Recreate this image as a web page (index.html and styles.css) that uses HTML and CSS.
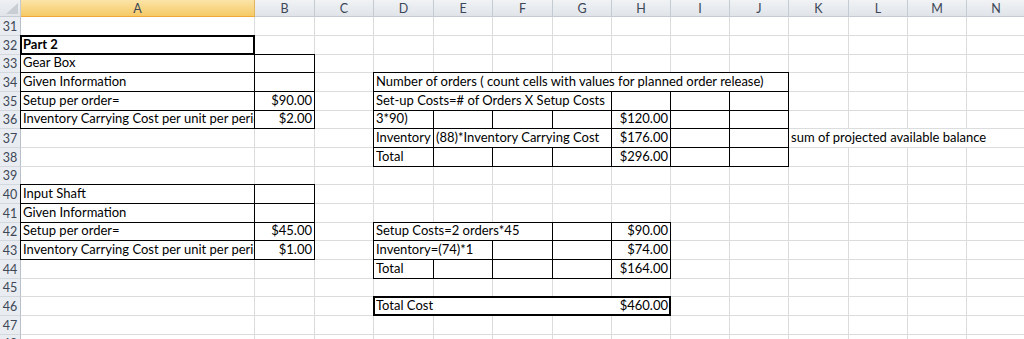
FILE: index.html
```html
<!DOCTYPE html>
<html lang="en">

<head>
  <meta charset="UTF-8">
  <meta name="viewport" content="width=device-width, initial-scale=1.0">
  <title>Part 2 - Ordering Costs</title>
  <link rel="stylesheet" href="styles.css">
</head>

<body>
  <div id="sheet" class="sheet"></div>

  <script>
    const columns = 'ABCDEFGHIJKLMN'.split('');
    const firstRow = 31;
    const lastRow = 48;

    // Cell contents, keyed by address. Strings starting with $ are right aligned.
    const values = {
      A32: { text: 'Part 2', bold: true },
      A33: 'Gear Box',
      A34: 'Given Information',
      D34: { text: 'Number of orders ( count cells with values for planned order release)', span: 7 },
      A35: 'Setup per order=',
      B35: '$90.00',
      D35: { text: 'Set-up Costs=# of Orders X Setup Costs', span: 4 },
      A36: 'Inventory Carrying Cost per unit per period',
      B36: '$2.00',
      D36: '3*90)',
      H36: '$120.00',
      D37: 'Inventory',
      E37: { text: '(88)*Inventory Carrying Cost', span: 3 },
      H37: '$176.00',
      K37: { text: 'sum of projected available balance', span: 4 },
      D38: 'Total',
      H38: '$296.00',
      A40: 'Input Shaft',
      A41: 'Given Information',
      A42: 'Setup per order=',
      B42: '$45.00',
      D42: { text: 'Setup Costs=2 orders*45', span: 3 },
      H42: '$90.00',
      A43: 'Inventory Carrying Cost per unit per period',
      B43: '$1.00',
      D43: { text: 'Inventory=(74)*1', span: 2 },
      H43: '$74.00',
      D44: 'Total',
      H44: '$164.00',
      D46: { text: 'Total Cost', span: 4, open: true },
      H46: '$460.00'
    };

    // Black cell borders: "each" boxes every cell of the range, otherwise only the outline
    const borders = [
      { range: 'A32', medium: true },
      { range: 'A33:B36', each: true },
      { range: 'D34:J34' },
      { range: 'D35:G35' },
      { range: 'H35:J35', each: true },
      { range: 'D36:J36', each: true },
      { range: 'D37' },
      { range: 'E37:G37' },
      { range: 'H37:J37', each: true },
      { range: 'D38:J38', each: true },
      { range: 'A40:B43', each: true },
      { range: 'D42:F42' },
      { range: 'G42:H42', each: true },
      { range: 'D43:E43' },
      { range: 'F43:H43', each: true },
      { range: 'D44:H44', each: true },
      { range: 'D46:H46', medium: true }
    ];

    const sheet = document.getElementById('sheet');

    function place(el, row, col, rowSpan, colSpan) {
      el.style.gridRow = `${row} / span ${rowSpan || 1}`;
      el.style.gridColumn = `${col} / span ${colSpan || 1}`;
    }

    // "D34" -> grid track numbers (row 1 and column 1 are the headers)
    function toGrid(ref) {
      return {
        col: columns.indexOf(ref[0]) + 2,
        row: parseInt(ref.slice(1), 10) - firstRow + 2
      };
    }

    const corner = document.createElement('div');
    corner.className = 'corner';
    place(corner, 1, 1);
    sheet.appendChild(corner);

    columns.forEach((letter, i) => {
      const head = document.createElement('div');
      head.className = 'col-head';
      if (letter === 'A') head.classList.add('selected');
      head.textContent = letter;
      place(head, 1, i + 2);
      sheet.appendChild(head);
    });

    for (let r = firstRow; r <= lastRow; r++) {
      const gridRow = r - firstRow + 2;

      const rowHead = document.createElement('div');
      rowHead.className = 'row-head';
      rowHead.textContent = r;
      place(rowHead, gridRow, 1);
      sheet.appendChild(rowHead);

      for (let c = 0; c < columns.length; c++) {
        let value = values[columns[c] + r] || {};
        if (typeof value === 'string') {
          value = { text: value, num: value.startsWith('$') };
        }
        const span = value.span || 1;

        const cell = document.createElement('div');
        cell.className = 'cell';
        if (value.num) cell.classList.add('num');
        if (value.bold) cell.classList.add('bold');
        if (value.open) cell.classList.add('open');
        if (value.text) cell.textContent = value.text;
        place(cell, gridRow, c + 2, 1, span);
        sheet.appendChild(cell);

        c += span - 1;
      }
    }

    function addBox(from, to, medium) {
      const box = document.createElement('div');
      box.className = medium ? 'box medium' : 'box';
      place(box, from.row, from.col, to.row - from.row + 1, to.col - from.col + 1);
      sheet.appendChild(box);
    }

    borders.forEach(border => {
      const [startRef, endRef] = border.range.split(':');
      const start = toGrid(startRef);
      const end = toGrid(endRef || startRef);

      if (border.each) {
        for (let row = start.row; row <= end.row; row++) {
          for (let col = start.col; col <= end.col; col++) {
            addBox({ row, col }, { row, col }, false);
          }
        }
      } else {
        addBox(start, end, border.medium);
      }
    });
  </script>
</body>

</html>
```

FILE: styles.css
```css
body {
  margin: 0;
  background-color: #fff;
  overflow: hidden;
  font-family: Lato, "Liberation Sans", sans-serif;
}

.sheet {
  display: grid;
  grid-template-columns: 21px 234px 60px 59px 60px 59px 60px 59px 59px 59px 59px 60px 59px 59px 59px;
  grid-template-rows: 17px 19px 19px 18px 19px 19px 18px 19px 19px 18px 19px 19px 18px 19px 19px 18px 19px 19px 18px;
}

/* Headers */
.corner,
.col-head,
.row-head {
  box-sizing: border-box;
  display: flex;
  color: #3c4757;
  font-size: 12.5px;
  border-right: 1px solid #c5cbd3;
  border-bottom: 1px solid #c5cbd3;
}

.corner {
  align-items: flex-end;
  justify-content: flex-end;
  padding: 0 2px 2px 0;
  background: linear-gradient(#eef0f3, #e1e5ea);
}

.corner::after {
  content: "";
  width: 12px;
  height: 11px;
  background-color: #c9ced5;
  clip-path: polygon(100% 0, 100% 100%, 0 100%);
}

.col-head {
  align-items: center;
  justify-content: center;
  background: linear-gradient(#f1f3f5, #e0e4e9);
}

.col-head.selected {
  background: linear-gradient(#fbe4a8, #f5c965);
  border-bottom-color: #f0a83a;
  border-right-color: #e2b45c;
}

.row-head {
  align-items: center;
  justify-content: center;
  background-color: #e9ecf0;
  border-right-color: #b9c0c9;
  border-bottom-color: #d3d8de;
}

/* Cells */
.cell {
  box-sizing: border-box;
  display: flex;
  align-items: flex-end;
  min-width: 0;
  padding: 0 2px 2px;
  overflow: hidden;
  white-space: nowrap;
  font-size: 13px;
  line-height: 16px;
  color: #000;
  border-right: 1px solid #dadcdd;
  border-bottom: 1px solid #dadcdd;
}

.cell.num {
  justify-content: flex-end;
}

.cell.bold {
  font-weight: bold;
}

.cell.open {
  border-right-color: transparent;
}

/* Black borders laid over the gridlines */
.box {
  z-index: 1;
  margin: -1px 0 0 -1px;
  border: 1px solid #000;
  pointer-events: none;
}

.box.medium {
  z-index: 2;
  border-width: 2px;
}
```
